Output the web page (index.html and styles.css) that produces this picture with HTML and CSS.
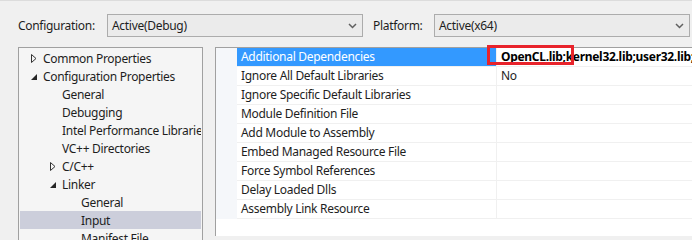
FILE: index.html
```html
<!DOCTYPE html>
<html lang="en">
<head>
    <meta charset="UTF-8">
    <title>Property Pages - Linker Input</title>
    <link rel="stylesheet" href="styles.css">
</head>
<body>
    <div class="dialog">
        <div class="toolbar">
            <span class="label label-config">Configuration:</span>
            <div class="combo combo-config">
                <span>Active(Debug)</span>
                <svg class="chevron" width="9" height="6" viewBox="0 0 9 6"><path d="M1 1 L4.5 4.5 L8 1" fill="none" stroke="#606060" stroke-width="1.5"/></svg>
            </div>
            <span class="label label-platform">Platform:</span>
            <div class="combo combo-platform">
                <span>Active(x64)</span>
                <svg class="chevron" width="9" height="6" viewBox="0 0 9 6"><path d="M1 1 L4.5 4.5 L8 1" fill="none" stroke="#606060" stroke-width="1.5"/></svg>
            </div>
        </div>

        <div class="main">
            <!-- Category tree -->
            <div class="tree">
                <div class="node lvl0">
                    <svg class="exp" width="8" height="9" viewBox="0 0 8 9"><path d="M1.5 0.5 L6 4.5 L1.5 8.5 Z" fill="none" stroke="#333" stroke-width="1"/></svg>
                    <span>Common Properties</span>
                </div>
                <div class="node lvl0">
                    <svg class="exp" width="8" height="9" viewBox="0 0 8 9"><path d="M7 2 L7 8 L1 8 Z" fill="#262626"/></svg>
                    <span>Configuration Properties</span>
                </div>
                <div class="node lvl1"><span>General</span></div>
                <div class="node lvl1"><span>Debugging</span></div>
                <div class="node lvl1"><span>Intel Performance Libraries</span></div>
                <div class="node lvl1"><span>VC++ Directories</span></div>
                <div class="node lvl1 has-exp">
                    <svg class="exp" width="8" height="9" viewBox="0 0 8 9"><path d="M1.5 0.5 L6 4.5 L1.5 8.5 Z" fill="none" stroke="#333" stroke-width="1"/></svg>
                    <span>C/C++</span>
                </div>
                <div class="node lvl1 has-exp">
                    <svg class="exp" width="8" height="9" viewBox="0 0 8 9"><path d="M7 2 L7 8 L1 8 Z" fill="#262626"/></svg>
                    <span>Linker</span>
                </div>
                <div class="node lvl2"><span>General</span></div>
                <div class="node lvl2 selected"><span>Input</span></div>
                <div class="node lvl2"><span>Manifest File</span></div>
            </div>

            <!-- Property grid -->
            <div class="grid">
                <div class="rows">
                    <div class="row active">
                        <div class="name">Additional Dependencies</div>
                        <div class="value bold">OpenCL.lib;kernel32.lib;user32.lib;gdi32.lib;winspool.lib;comdlg32.lib</div>
                    </div>
                    <div class="row"><div class="name">Ignore All Default Libraries</div><div class="value">No</div></div>
                    <div class="row"><div class="name">Ignore Specific Default Libraries</div><div class="value"></div></div>
                    <div class="row"><div class="name">Module Definition File</div><div class="value"></div></div>
                    <div class="row"><div class="name">Add Module to Assembly</div><div class="value"></div></div>
                    <div class="row"><div class="name">Embed Managed Resource File</div><div class="value"></div></div>
                    <div class="row"><div class="name">Force Symbol References</div><div class="value"></div></div>
                    <div class="row"><div class="name">Delay Loaded Dlls</div><div class="value"></div></div>
                    <div class="row"><div class="name">Assembly Link Resource</div><div class="value"></div></div>
                </div>
            </div>
        </div>

        <!-- annotation -->
        <div class="highlight-box"></div>
    </div>
</body>
</html>
```

FILE: styles.css
```css
body {
    margin: 0;
    background: #f0f0f0;
    font-family: "Noto Sans", "Open Sans", sans-serif;
    font-size: 12px;
    letter-spacing: -0.3px;
    color: #1e1e1e;
    overflow: hidden;
}

.dialog {
    position: relative;
    width: 692px;
    height: 240px;
    border-top: 1px solid #dcdcdc;
    box-sizing: border-box;
    overflow: hidden;
}

.toolbar {
    display: flex;
    align-items: center;
    height: 23px;
    margin-top: 13px;
}

.label-config {
    margin-left: 18px;
    width: 89px;
}

.label-platform {
    margin-left: 10px;
    width: 61px;
}

.combo {
    display: flex;
    align-items: center;
    justify-content: space-between;
    height: 23px;
    box-sizing: border-box;
    border: 1px solid #acacac;
    background: #ebebeb;
    padding: 0 5px 0 4px;
}

.combo-config {
    width: 256px;
}

.combo-platform {
    width: 256px;
}

.chevron {
    display: block;
}

.main {
    display: flex;
    margin-top: 10px;
    height: 200px;
}

.tree {
    width: 185px;
    margin-left: 18px;
    box-sizing: border-box;
    border: 1px solid #a0a0a0;
    background: #f5f5f5;
    padding: 1px 1px 0 1px;
}

.node {
    display: flex;
    align-items: center;
    height: 18px;
    white-space: nowrap;
    overflow: hidden;
}

.node .exp {
    flex: none;
    margin-right: 5px;
}

.lvl0 {
    padding-left: 10px;
}

.lvl1 {
    padding-left: 42px;
}

.lvl1.has-exp {
    padding-left: 29px;
}

.lvl2 {
    padding-left: 61px;
}

.selected {
    background: #cccedb;
}

.grid {
    flex: 1;
    margin-left: 12px;
    border-top: 1px solid #a0a0a0;
    border-left: 1px solid #a0a0a0;
    background: #fff;
    height: 189px;
    box-sizing: border-box;
}

.rows {
    border-left: 21px solid #f5f7fa;
}

.row {
    display: flex;
    height: 19px;
    box-sizing: border-box;
    border-bottom: 1px solid #f0f0f0;
}

.row .name {
    width: 259px;
    flex: none;
    padding-left: 4px;
    box-sizing: border-box;
    line-height: 18px;
    white-space: nowrap;
}

.row .value {
    flex: 1;
    border-left: 1px solid #f0f0f0;
    padding-left: 4px;
    line-height: 18px;
    white-space: nowrap;
    overflow: hidden;
}

.row.active .name {
    background: #3399ff;
    color: #fff;
}

.bold {
    font-weight: bold;
    color: #000;
}

.highlight-box {
    position: absolute;
    left: 487px;
    top: 44px;
    width: 87px;
    height: 20px;
    box-sizing: border-box;
    border: 3px solid #e8232b;
}
```
